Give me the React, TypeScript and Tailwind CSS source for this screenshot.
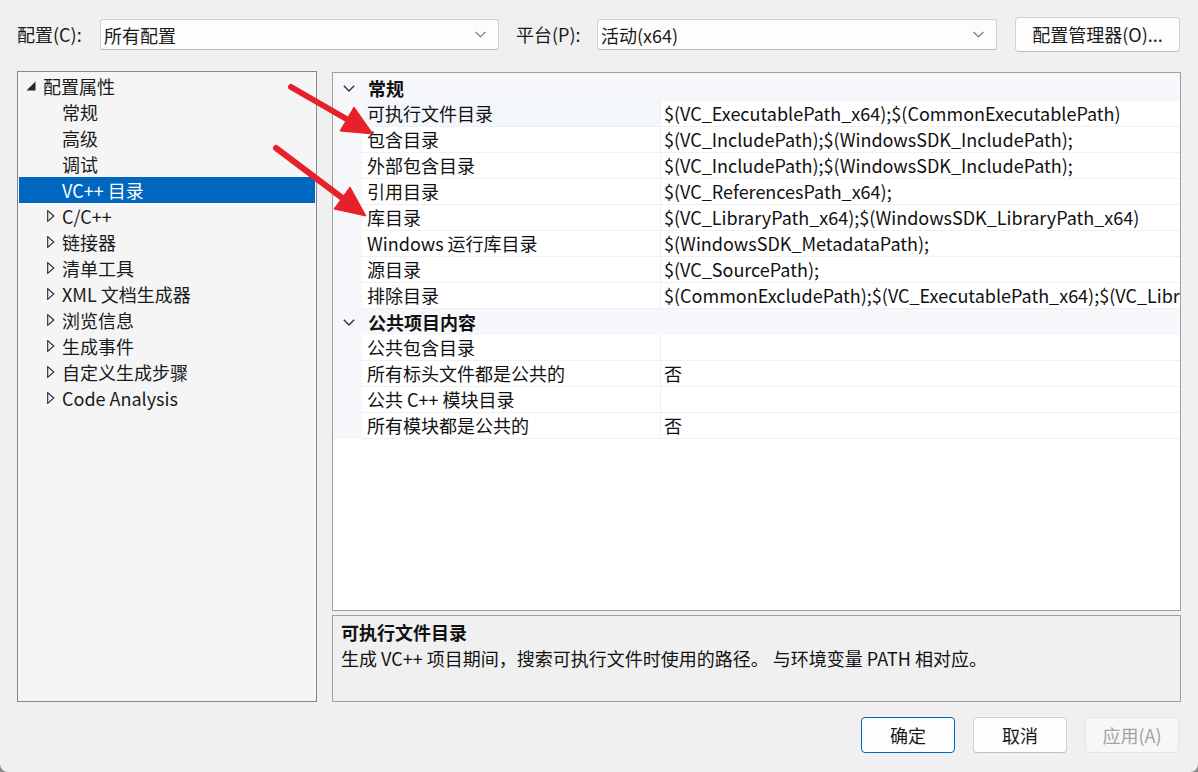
import React from 'react';

const FONT = '"Noto Sans CJK SC", "Noto Sans", sans-serif';

type TreeItem = { label: string; level: 0 | 1; icon: 'open' | 'closed' | 'none'; selected?: boolean };

const tree: TreeItem[] = [
  { label: '配置属性', level: 0, icon: 'open' },
  { label: '常规', level: 1, icon: 'none' },
  { label: '高级', level: 1, icon: 'none' },
  { label: '调试', level: 1, icon: 'none' },
  { label: 'VC++ 目录', level: 1, icon: 'none', selected: true },
  { label: 'C/C++', level: 1, icon: 'closed' },
  { label: '链接器', level: 1, icon: 'closed' },
  { label: '清单工具', level: 1, icon: 'closed' },
  { label: 'XML 文档生成器', level: 1, icon: 'closed' },
  { label: '浏览信息', level: 1, icon: 'closed' },
  { label: '生成事件', level: 1, icon: 'closed' },
  { label: '自定义生成步骤', level: 1, icon: 'closed' },
  { label: 'Code Analysis', level: 1, icon: 'closed' },
];

type GridRow =
  | { kind: 'cat'; label: string; first?: boolean }
  | { kind: 'prop'; name: string; value: string; selected?: boolean };

const rows: GridRow[] = [
  { kind: 'cat', label: '常规', first: true },
  { kind: 'prop', name: '可执行文件目录', value: '$(VC_ExecutablePath_x64);$(CommonExecutablePath)', selected: true },
  { kind: 'prop', name: '包含目录', value: '$(VC_IncludePath);$(WindowsSDK_IncludePath);' },
  { kind: 'prop', name: '外部包含目录', value: '$(VC_IncludePath);$(WindowsSDK_IncludePath);' },
  { kind: 'prop', name: '引用目录', value: '$(VC_ReferencesPath_x64);' },
  { kind: 'prop', name: '库目录', value: '$(VC_LibraryPath_x64);$(WindowsSDK_LibraryPath_x64)' },
  { kind: 'prop', name: 'Windows 运行库目录', value: '$(WindowsSDK_MetadataPath);' },
  { kind: 'prop', name: '源目录', value: '$(VC_SourcePath);' },
  { kind: 'prop', name: '排除目录', value: '$(CommonExcludePath);$(VC_ExecutablePath_x64);$(VC_LibraryPath_x64)' },
  { kind: 'cat', label: '公共项目内容' },
  { kind: 'prop', name: '公共包含目录', value: '' },
  { kind: 'prop', name: '所有标头文件都是公共的', value: '否' },
  { kind: 'prop', name: '公共 C++ 模块目录', value: '' },
  { kind: 'prop', name: '所有模块都是公共的', value: '否' },
];

function DropChevron() {
  return (
    <svg width="11" height="7" viewBox="0 0 11 7" className="shrink-0">
      <polyline points="0.5,0.8 5.5,5.8 10.5,0.8" fill="none" stroke="#6b6b6b" strokeWidth="1.1" />
    </svg>
  );
}

function Dropdown({ text, width }: { text: string; width: string }) {
  return (
    <div className={`${width} h-[31px] bg-[#fdfdfd] border border-[#d0d0d0] border-b-[#b8b8b8] rounded-[3px] flex items-center pl-[3px] pr-[12px] justify-between`}>
      <span className="text-[18px] text-[#1a1a1a] leading-none">{text}</span>
      <DropChevron />
    </div>
  );
}

function TreeRow({ item }: { item: TreeItem }) {
  const base = `h-[26px] flex items-center whitespace-nowrap ${item.selected ? 'bg-[#0067c0] text-white' : 'text-[#1a1a1a]'}`;
  if (item.level === 0) {
    return (
      <div className={`${base} pl-[7px]`}>
        <svg width="10" height="10" viewBox="0 0 10 10" className="shrink-0">
          <polygon points="9.5,0.5 9.5,9.5 0.5,9.5" fill="#262626" />
        </svg>
        <span className="ml-[7px]">{item.label}</span>
      </div>
    );
  }
  if (item.icon === 'closed') {
    return (
      <div className={`${base} pl-[28px]`}>
        <svg width="8" height="12" viewBox="0 0 8 12" className="shrink-0">
          <polygon points="0.7,0.7 6.8,6 0.7,11.3" fill="none" stroke="#262626" strokeWidth="1.1" />
        </svg>
        <span className="ml-[7px]">{item.label}</span>
      </div>
    );
  }
  return (
    <div className={`${base} pl-[43px]`}>
      <span>{item.label}</span>
    </div>
  );
}

function CatChevron() {
  return (
    <svg width="12" height="7" viewBox="0 0 12 7" className="shrink-0">
      <polyline points="0.8,0.8 6,6 11.2,0.8" fill="none" stroke="#333" strokeWidth="1.4" />
    </svg>
  );
}

function Grid() {
  return (
    <div className="w-[849px] h-[539px] border border-[#a0a0a0] bg-white overflow-hidden text-[18px] text-[#111]">
      {rows.map((r, i) => {
        if (r.kind === 'cat') {
          return (
            <div key={i} className={`${r.first ? 'h-[28px] pt-[2px]' : 'h-[26px]'} bg-[#f5f7fa] flex items-center pl-[10px]`}>
              <CatChevron />
              <span className="ml-[13px] font-bold whitespace-nowrap">{r.label}</span>
            </div>
          );
        }
        return (
          <div key={i} className="h-[26px] flex">
            <div className="w-[29px] shrink-0 bg-[#f5f7fa]" />
            <div className={`w-[298px] shrink-0 border-b border-[#f0f0f0] flex items-center pl-[5px] whitespace-nowrap ${r.selected ? 'bg-[#f3f6fb]' : 'bg-white'}`}>
              {r.name}
            </div>
            <div className="flex-1 min-w-0 border-b border-l border-[#f0f0f0] flex items-center pl-[3px] whitespace-nowrap overflow-hidden">
              {r.value}
            </div>
          </div>
        );
      })}
    </div>
  );
}

function Arrows() {
  return (
    <svg className="absolute left-0 top-0 pointer-events-none" width="1198" height="772" viewBox="0 0 1198 772">
      <g fill="#e8202a" stroke="#e8202a">
        <line x1="291" y1="87" x2="350" y2="121" strokeWidth="6" strokeLinecap="round" />
        <polygon points="373,134 340,131 354,107" strokeWidth="1" strokeLinejoin="round" />
        <line x1="276" y1="148" x2="345" y2="200" strokeWidth="6" strokeLinecap="round" />
        <polygon points="366,216 334,209 350,187" strokeWidth="1" strokeLinejoin="round" />
      </g>
    </svg>
  );
}

export default function App() {
  return (
    <div className="w-[1198px] h-[772px] bg-[#8c8c8c]">
      <div className="relative w-[1198px] h-[772px] bg-[#f0f0f0] rounded-b-[8px] overflow-hidden" style={{ fontFamily: FONT }}>
        {/* top bar */}
        <div className="flex items-center pl-[17px] pt-[17px] h-[52px]">
          <span className="w-[83px] text-[18px] text-[#1a1a1a] whitespace-nowrap">配置(C):</span>
          <Dropdown text="所有配置" width="w-[399px]" />
          <span className="ml-[17px] w-[81px] text-[18px] text-[#1a1a1a] whitespace-nowrap">平台(P):</span>
          <Dropdown text="活动(x64)" width="w-[400px]" />
          <div className="ml-[18px] w-[165px] h-[35px] bg-[#fdfdfd] border border-[#d0d0d0] border-b-[#bdbdbd] rounded-[4px] flex items-center justify-center text-[18px] text-[#1a1a1a] whitespace-nowrap">
            配置管理器(O)...
          </div>
        </div>

        {/* main */}
        <div className="flex pl-[17px] mt-[19px]">
          <div className="w-[300px] h-[631px] border border-[#828790] bg-[#f5f5f5] p-[1px] text-[18px]">
            {tree.map((t, i) => (
              <TreeRow key={i} item={t} />
            ))}
          </div>
          <div className="ml-[15px] flex flex-col">
            <div className="mt-[1px]">
              <Grid />
            </div>
            <div className="mt-[4px] w-[849px] h-[87px] border border-[#a0a0a0] bg-[#f0f0f0] px-[8px] pt-[3px] text-[18px] text-[#111] leading-[26px] whitespace-nowrap">
              <div className="font-bold">可执行文件目录</div>
              <div>生成 VC++ 项目期间，搜索可执行文件时使用的路径。 与环境变量 PATH 相对应。</div>
            </div>
          </div>
        </div>

        {/* buttons */}
        <div className="flex justify-end pr-[19px] mt-[15px] gap-[18px]">
          <div className="w-[94px] h-[36px] bg-[#fdfdfd] border border-[#0067c0] rounded-[4px] flex items-center justify-center text-[18px] text-[#1a1a1a]">确定</div>
          <div className="w-[94px] h-[36px] bg-[#fdfdfd] border border-[#d0d0d0] border-b-[#bdbdbd] rounded-[4px] flex items-center justify-center text-[18px] text-[#1a1a1a]">取消</div>
          <div className="w-[94px] h-[36px] bg-[#f7f7f7] border border-[#e5e5e5] rounded-[4px] flex items-center justify-center text-[18px] text-[#a2a2a2]">应用(A)</div>
        </div>

        <Arrows />
      </div>
    </div>
  );
}
